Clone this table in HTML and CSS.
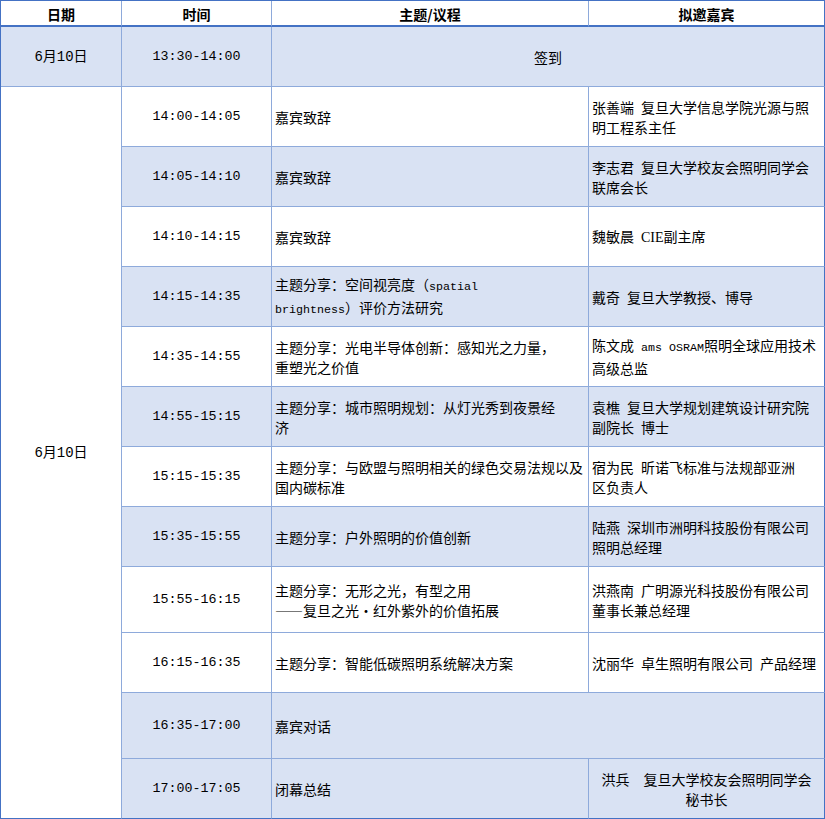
FILE: index.html
```html
<!DOCTYPE html>
<html lang="zh-CN">
<head>
<meta charset="utf-8">
<title>议程</title>
<link rel="stylesheet" href="styles.css">
</head>
<body>
<div class="agenda">
  <div class="cell head"><div class="in">日期</div></div>
  <div class="cell head"><div class="in">时间</div></div>
  <div class="cell head"><div class="in">主题/议程</div></div>
  <div class="cell head last"><div class="in">拟邀嘉宾</div></div>

  <div class="cell date shade"><div class="in">6月10日</div></div>
  <div class="cell time shade"><div class="in">13:30-14:00</div></div>
  <div class="cell wide center shade last"><div class="in">签到</div></div>

  <div class="cell date big"><div class="in">6月10日</div></div>

  <div class="cell time"><div class="in">14:00-14:05</div></div>
  <div class="cell topic"><div class="in">嘉宾致辞</div></div>
  <div class="cell guest last"><div class="in">张善端&ensp;复旦大学信息学院光源与照<br>明工程系主任</div></div>

  <div class="cell time shade"><div class="in">14:05-14:10</div></div>
  <div class="cell topic shade"><div class="in">嘉宾致辞</div></div>
  <div class="cell guest shade last"><div class="in">李志君&ensp;复旦大学校友会照明同学会<br>联席会长</div></div>

  <div class="cell time"><div class="in">14:10-14:15</div></div>
  <div class="cell topic"><div class="in">嘉宾致辞</div></div>
  <div class="cell guest last"><div class="in">魏敏晨&ensp;<span class="serif">CIE</span>副主席</div></div>

  <div class="cell time shade"><div class="in">14:15-14:35</div></div>
  <div class="cell topic shade"><div class="in">主题分享：空间视亮度（<span class="en">spatial</span><br><span class="en">brightness</span>）评价方法研究</div></div>
  <div class="cell guest shade last"><div class="in">戴奇&ensp;复旦大学教授、博导</div></div>

  <div class="cell time"><div class="in">14:35-14:55</div></div>
  <div class="cell topic"><div class="in">主题分享：光电半导体创新：感知光之力量，<br>重塑光之价值</div></div>
  <div class="cell guest last"><div class="in">陈文成&ensp;<span class="en">ams OSRAM</span>照明全球应用技术<br>高级总监</div></div>

  <div class="cell time shade"><div class="in">14:55-15:15</div></div>
  <div class="cell topic shade"><div class="in">主题分享：城市照明规划：从灯光秀到夜景经<br>济</div></div>
  <div class="cell guest shade last"><div class="in">袁樵&ensp;复旦大学规划建筑设计研究院<br>副院长&ensp;博士</div></div>

  <div class="cell time"><div class="in">15:15-15:35</div></div>
  <div class="cell topic"><div class="in">主题分享：与欧盟与照明相关的绿色交易法规以及<br>国内碳标准</div></div>
  <div class="cell guest last"><div class="in">宿为民&ensp;昕诺飞标准与法规部亚洲<br>区负责人</div></div>

  <div class="cell time shade"><div class="in">15:35-15:55</div></div>
  <div class="cell topic shade"><div class="in">主题分享：户外照明的价值创新</div></div>
  <div class="cell guest shade last"><div class="in">陆燕&ensp;深圳市洲明科技股份有限公司<br>照明总经理</div></div>

  <div class="cell time"><div class="in">15:55-16:15</div></div>
  <div class="cell topic"><div class="in">主题分享：无形之光，有型之用<br>——复旦之光·红外紫外的价值拓展</div></div>
  <div class="cell guest last"><div class="in">洪燕南&ensp;广明源光科技股份有限公司<br>董事长兼总经理</div></div>

  <div class="cell time"><div class="in">16:15-16:35</div></div>
  <div class="cell topic"><div class="in">主题分享：智能低碳照明系统解决方案</div></div>
  <div class="cell guest last"><div class="in">沈丽华&ensp;卓生照明有限公司&ensp;产品经理</div></div>

  <div class="cell time shade"><div class="in">16:35-17:00</div></div>
  <div class="cell topic wide shade last"><div class="in">嘉宾对话</div></div>

  <div class="cell time shade bottom"><div class="in">17:00-17:05</div></div>
  <div class="cell topic shade bottom"><div class="in">闭幕总结</div></div>
  <div class="cell guest center shade last bottom"><div class="in">洪兵　复旦大学校友会照明同学会<br>秘书长</div></div>
</div>
</body>
</html>
```
FILE: styles.css
```css
html, body {
  margin: 0;
  padding: 0;
  background: #ffffff;
}

body {
  font-family: "Noto Sans CJK SC", "Liberation Sans", sans-serif;
  font-size: 14px;
  color: #000000;
}

.agenda {
  width: 825px;
  height: 819px;
  box-sizing: border-box;
  border-top: 1px solid #4472c4;
  border-left: 1px solid #4472c4;
  display: grid;
  grid-template-columns: 121px 150px 317px 236px;
  grid-template-rows: 26px 60px 60px 60px 60px 60px 60px 60px 60px 60px 66px 60px 66px 60px;
}

.cell {
  box-sizing: border-box;
  border-right: 1px solid #8eaadb;
  border-bottom: 1px solid #8eaadb;
  display: flex;
  align-items: center;
  line-height: 20px;
  white-space: nowrap;
  overflow: hidden;
  background: #ffffff;
}

.in {
  flex: 1 1 auto;
  min-width: 0;
}

.cell.shade {
  background: #d9e2f3;
}

.cell.last {
  border-right-color: #4472c4;
}

.cell.bottom {
  border-bottom-color: #4472c4;
}

.head {
  text-align: center;
  font-weight: bold;
  border-bottom: 2px solid #4472c4;
  padding-top: 1px;
}

.date {
  text-align: center;
  font-family: "Liberation Mono", "Noto Sans CJK SC", monospace;
}

.date.big {
  grid-column: 1;
  grid-row: 3 / span 12;
  border-bottom-color: #4472c4;
}

.time {
  text-align: center;
  font-family: "Liberation Mono", monospace;
  font-size: 13.33px;
}

.topic,
.guest {
  padding-left: 3px;
}

.wide {
  grid-column: span 2;
}

.center {
  text-align: center;
  padding-left: 0;
}

.en {
  font-family: "Liberation Mono", monospace;
  font-size: 11.67px;
}

.serif {
  font-family: "Liberation Serif", serif;
}
```
